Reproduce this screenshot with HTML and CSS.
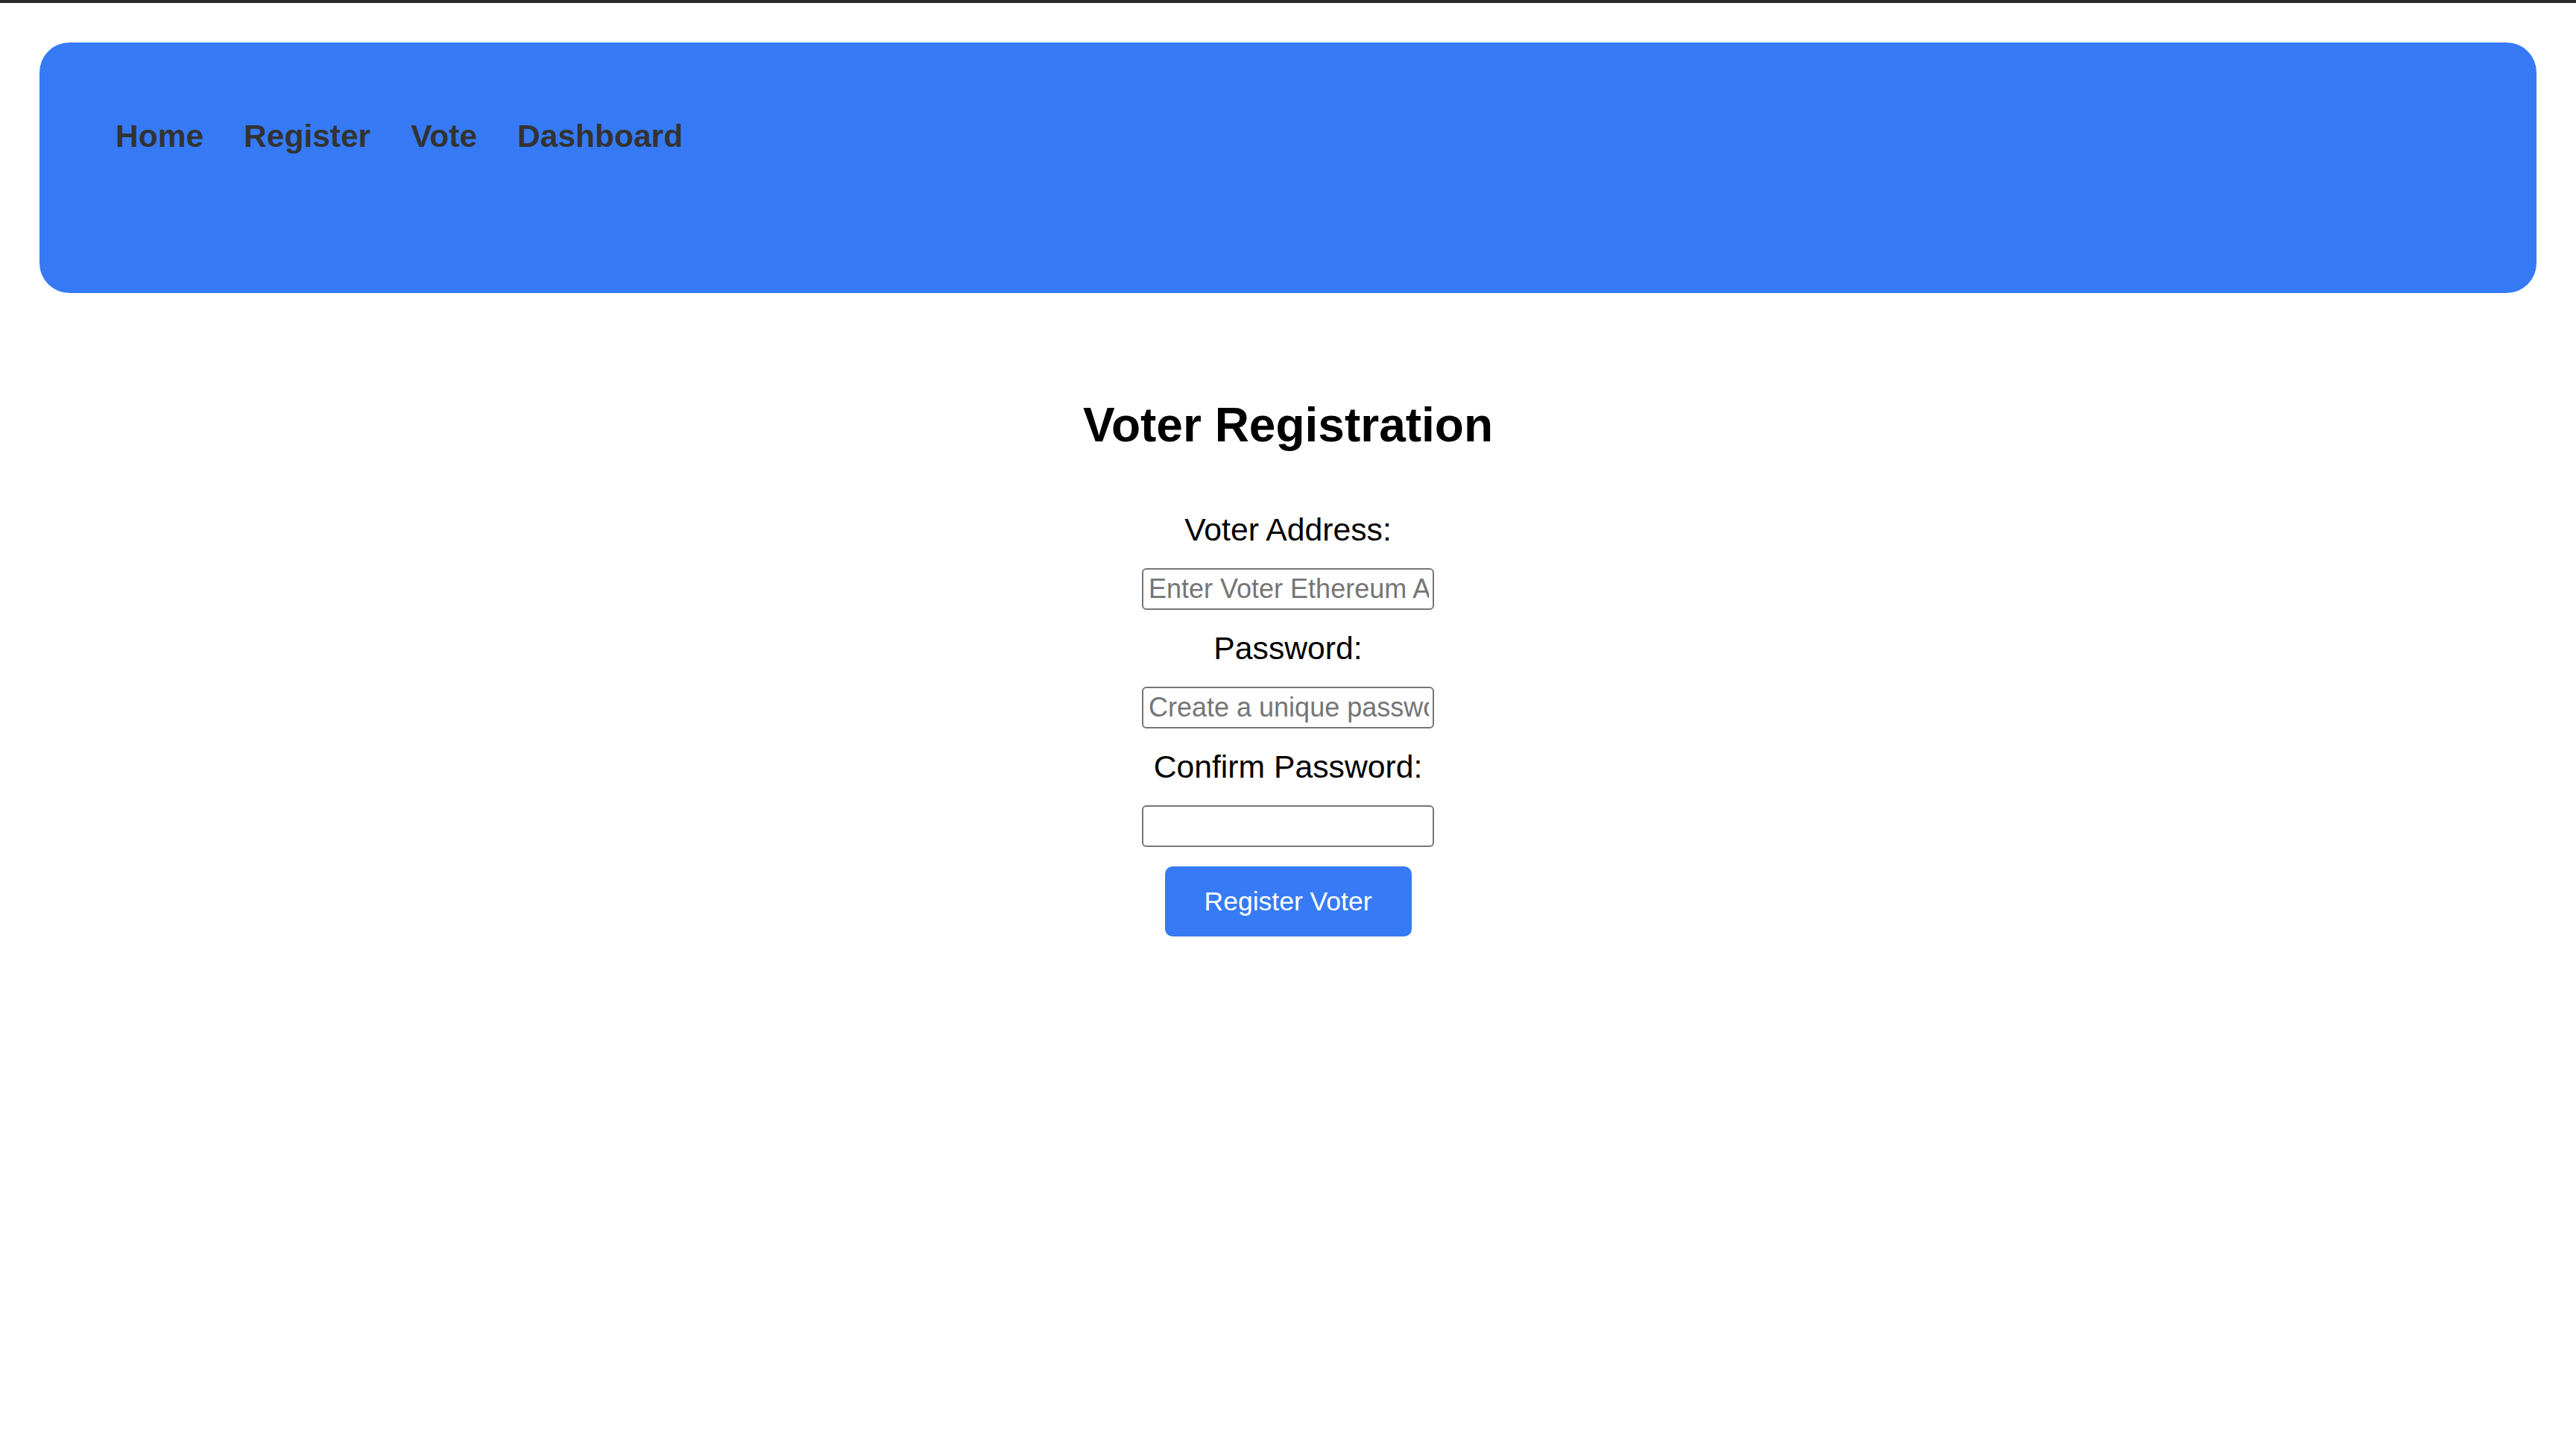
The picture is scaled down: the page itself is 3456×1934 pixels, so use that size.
FILE: index.html
```html
<!DOCTYPE html>
<html lang="en">
<head>
<meta charset="utf-8">
<title>Voter Registration</title>
<link rel="stylesheet" href="styles.css">
</head>
<body>
<div class="topbar"></div>
<div class="page">
  <header class="header">
    <nav class="nav">
      <a class="nav-link" href="#">Home</a>
      <a class="nav-link" href="#">Register</a>
      <a class="nav-link" href="#">Vote</a>
      <a class="nav-link" href="#">Dashboard</a>
    </nav>
  </header>
  <main class="main">
    <h1 class="title">Voter Registration</h1>
    <form class="form">
      <label class="label" for="addr">Voter Address:</label>
      <input class="field" id="addr" type="text" placeholder="Enter Voter Ethereum Address">
      <label class="label" for="pw">Password:</label>
      <input class="field" id="pw" type="password" placeholder="Create a unique password">
      <label class="label" for="pw2">Confirm Password:</label>
      <input class="field" id="pw2" type="password">
      <button class="btn" type="button">Register Voter</button>
    </form>
  </main>
</div>
</body>
</html>
```

FILE: styles.css
```css
html, body {
  margin: 0;
  padding: 0;
  background: #ffffff;
}

body {
  font-family: "Liberation Sans", Arial, Helvetica, sans-serif;
  color: #000;
}

.topbar {
  height: 4px;
  background: #2a2a2a;
}

.page {
  padding: 53px 53px 0;
}

.header {
  box-sizing: border-box;
  height: 336px;
  background: #367bf5;
  border-radius: 40px;
  padding: 101px 100px 0 102px;
}

.nav {
  display: flex;
  gap: 54px;
}

.nav-link {
  font-size: 42.5px;
  line-height: 50px;
  font-weight: 700;
  color: #333333;
  text-decoration: none;
}

.main {
  display: flex;
  flex-direction: column;
  align-items: center;
  margin-top: 141px;
}

.title {
  margin: 0 0 79px;
  font-size: 64px;
  line-height: 72px;
  font-weight: 700;
}

.form {
  display: flex;
  flex-direction: column;
  align-items: center;
  gap: 26.5px;
}

.label {
  display: block;
  font-size: 42.7px;
  line-height: 50px;
  color: #000;
}

.field {
  box-sizing: border-box;
  width: 392px;
  height: 56px;
  margin: 0;
  padding: 0 5px 0 7px;
  border: 2px solid #767676;
  border-radius: 6px;
  background: #fff;
  font-family: "Liberation Sans", Arial, Helvetica, sans-serif;
  font-size: 36px;
  color: #000;
  outline: none;
}

.field::placeholder {
  color: #757575;
}

.btn {
  box-sizing: border-box;
  width: 331px;
  height: 94px;
  margin: 0;
  padding: 0;
  border: none;
  border-radius: 10px;
  background: #367bf5;
  color: #ffffff;
  font-family: "Liberation Sans", Arial, Helvetica, sans-serif;
  font-size: 35.5px;
  cursor: pointer;
}
```
